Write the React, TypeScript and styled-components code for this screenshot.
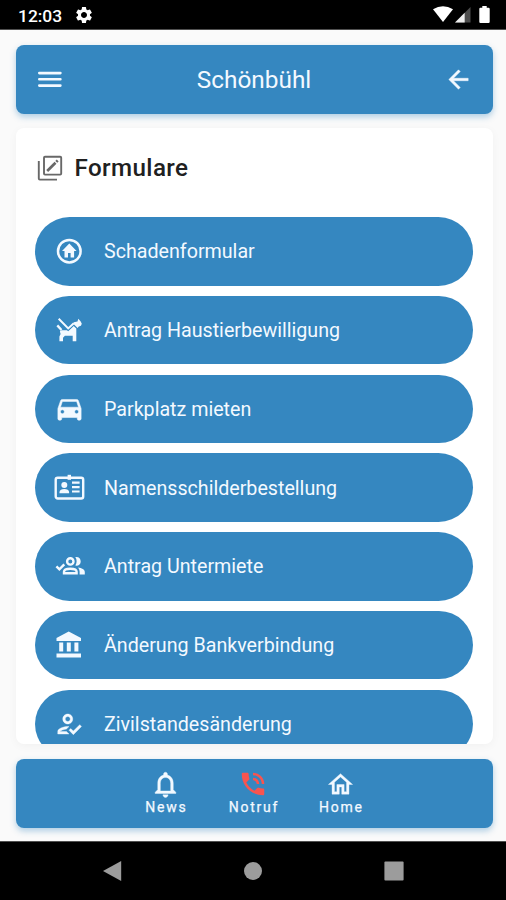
import React from "react";
import styled, { createGlobalStyle } from "styled-components";
import {
  MdArrowBack,
  MdDirectionsCar,
  MdNotificationsNone,
  MdOutlineHome,
  MdOutlineHowToReg,
  MdPhoneInTalk,
  MdSettings,
} from "react-icons/md";

const BLUE = "#3587c0";

const GlobalStyle = createGlobalStyle`
  * { box-sizing: border-box; }
  body { margin: 0; background: #fafafa; font-family: Roboto, "Liberation Sans", sans-serif; }
  svg { display: block; flex: none; }
  svg path[d^="M0 0h24v24H0"] { stroke: none; }
  button { border: 0; margin: 0; padding: 0; background: none; color: inherit; font: inherit; }
`;

const Screen = styled.div`
  width: 506px;
  height: 900px;
  display: flex;
  flex-direction: column;
  background: #fafafa;
  overflow: hidden;
`;

const StatusBar = styled.header`
  height: 30px;
  flex: none;
  display: flex;
  justify-content: space-between;
  padding: 0 16px 0 18px;
  background: #000;
  border-bottom: 1px solid #505050;
  color: #fff;
`;

const StatusGroup = styled.div<{ $gap: number }>`
  display: flex;
  align-items: center;
  gap: ${(p) => p.$gap}px;
`;

const Clock = styled.span`
  font-size: 17.4px;
  line-height: 30px;
  font-weight: 500;
  padding-top: 3px;
`;

const Main = styled.main`
  flex: 1;
  min-height: 0;
  display: flex;
  flex-direction: column;
  gap: 14px;
  padding: 15px 13px 13px 16px;
`;

const Bar = styled.div`
  height: 69px;
  flex: none;
  display: flex;
  align-items: center;
  border-radius: 8px;
  background: ${BLUE};
  color: #f3f9ff;
  box-shadow: 0 3px 6px rgba(53, 135, 192, 0.38);
`;

const AppBar = styled(Bar)`
  justify-content: space-between;
  padding: 0 20px 0 18px;
`;

const Title = styled.h1`
  margin: 0 1px 0 0;
  font-size: 24.4px;
  font-weight: 400;
  line-height: 30px;
`;

const Card = styled.section`
  height: 616px;
  flex: none;
  overflow: hidden;
  padding: 23px 20px 0 19px;
  border-radius: 8px;
  background: #fff;
  box-shadow: 0 2px 10px rgba(0, 0, 0, 0.04);
`;

const Heading = styled.div`
  height: 34px;
  margin-bottom: 32px;
  display: flex;
  align-items: center;
  gap: 7.5px;
  color: #202020;
`;

const HeadingText = styled.h2`
  margin: 0;
  font-size: 24.2px;
  line-height: 33px;
  font-weight: 500;
  letter-spacing: 0.4px;
`;

const List = styled.div`
  display: flex;
  flex-direction: column;
  gap: 10.3px;
`;

const Pill = styled.button`
  width: 100%;
  height: 68.5px;
  flex: none;
  display: flex;
  align-items: center;
  padding-left: 18px;
  gap: 19px;
  border-radius: 35px;
  background: ${BLUE};
  color: #f3f9ff;
  font-size: 19.67px;
  text-align: left;
`;

const IconSlot = styled.span`
  width: 32px;
  height: 32px;
  flex: none;
  display: flex;
  align-items: center;
  justify-content: center;
`;

const Label = styled.span`
  padding-top: 2px;
  line-height: 28px;
`;

const BottomBar = styled(Bar)`
  margin-top: 1px;
  padding-right: 3px;
  justify-content: center;
`;

const NavItem = styled.button<{ $accent?: string }>`
  width: 87.5px;
  display: flex;
  flex-direction: column;
  align-items: center;
  font-size: 14px;
  line-height: 16px;
  padding-bottom: 3px;
  svg { color: ${(p) => p.$accent ?? "inherit"}; }
`;

const NavIcon = styled.span`
  height: 30px;
  display: flex;
  align-items: center;
`;

const NavLabel = styled.span`
  letter-spacing: 1.75px;
  margin-right: -1.75px;
  -webkit-text-stroke: 0.25px currentColor;
`;

const SystemNav = styled.footer`
  height: 59px;
  flex: none;
  display: flex;
  align-items: center;
  justify-content: center;
  gap: 121px;
  background: #000;
  border-top: 1px solid #505050;
  color: #9c9c9c;
`;

const MenuIcon = () => (
  <svg width="31" height="31" viewBox="0 0 31 31" stroke="currentColor" strokeWidth="2.6" strokeLinecap="round">
    <path d="M5.3 9.1H26.4M5.3 15.3H26.4M5.3 21.6H26.4" />
  </svg>
);

const EditStackIcon = () => (
  <svg width="32" height="32" viewBox="0 0 32 32" fill="none" stroke="#686868" strokeWidth="1.9">
    <rect x="9" y="4.8" width="17.2" height="17.8" rx="1" />
    <path d="M3.8 9V26.5Q3.8 27.6 4.8 27.6H22" />
    <path d="M12.2 19 20.5 10.7" strokeWidth="2.7" />
    <path d="M21.3 9.9 22.7 8.5" strokeWidth="2.7" />
  </svg>
);

const HomeCircleIcon = () => (
  <svg width="32" height="32" viewBox="0 0 32 32" fill="currentColor">
    <circle cx="16.3" cy="16.2" r="11.3" fill="none" stroke="currentColor" strokeWidth="2.5" />
    <path d="M16.3 8.6 9 15.9H11.5V22.6H15V18H17.6V22.6H21.1V15.9H23.6Z" />
  </svg>
);

const DogIcon = () => (
  <svg width="32" height="32" viewBox="0 0 32 32" fill="currentColor">
    <path d="M6.9 17.4Q7.4 16.2 9 16.2H16L20.4 11.8 23.3 14.6V27.3H19.7V21.7H11.9L10 23.7V27.3H6.4V22.6L7.6 20Z" />
    <path d="M5.7 4.7 15.2 14.4 20.8 9.2" fill="none" stroke={BLUE} strokeWidth="4" />
    <path d="M5.7 4.7 15.2 14.4 20.8 9.2" fill="none" stroke="currentColor" strokeWidth="2" />
    <path d="M4.3 11.4 8.5 16" fill="none" stroke="currentColor" strokeWidth="2.3" />
    <path d="M20.8 8.2 24.5 7.4 25.3 4.8 27.7 7.5 28.8 9.8Q28.6 12.2 25.8 12.6L24.6 13.9 20.3 9.8Z" />
  </svg>
);

const BadgeIcon = () => (
  <svg width="32" height="32" viewBox="0 0 32 32" fill="currentColor">
    <rect x="2.7" y="5.7" width="27.5" height="20.8" rx="2" fill="none" stroke="currentColor" strokeWidth="2.4" />
    <path d="M14.6 2.8H18V7.8H14.6Z" />
    <circle cx="11.3" cy="12.9" r="3" />
    <path d="M6.5 21.3V19.9C6.5 18 8.7 17 11.3 17S16.1 18 16.1 19.9V21.3Z" />
    <path d="M19 10.7H26.6M19 15.1H26.6M19 19.5H26.6" stroke="currentColor" strokeWidth="2.2" />
  </svg>
);

const PeopleCheckIcon = () => (
  <svg width="32" height="32" viewBox="0 0 32 32" fill="none" stroke="currentColor" strokeWidth="2.4">
    <path d="M3.4 16.3 6.4 19.4 11.3 14.4" />
    <circle cx="17.3" cy="11.4" r="3.2" />
    <path d="M11 23.3V21.8C11 19.7 14.3 18.7 17.3 18.7S23.6 19.7 23.6 21.8V23.3Z" />
    <path
      d="M22.3 7.1C26 6.7 27.7 8.7 27.7 11.4S25.8 16 22.3 15.6C24.1 12.9 24.1 9.8 22.3 7.1ZM25.1 17.5C28.7 18 31.8 19.3 31.8 22V24.5H26.6V21.8Q26.6 19.2 25.1 17.5Z"
      fill="currentColor"
      stroke="none"
    />
  </svg>
);

const BankIcon = () => (
  <svg width="32" height="32" viewBox="0 0 32 32" fill="currentColor">
    <path d="M15.7 2.6 28 9.1V11.9H3.5V9.1ZM6.2 13.6H10.2V22.6H6.2ZM13.8 13.6H17.8V22.6H13.8ZM21.4 13.6H25.4V22.6H21.4ZM3.5 24.6H28V28.6H3.5Z" />
  </svg>
);

const WifiIcon = () => (
  <svg width="20" height="17" viewBox="0 0 20 17" fill="currentColor">
    <path d="M0 3.2Q10-2.8 20 3.2L10 16Z" />
  </svg>
);

const SignalIcon = () => (
  <svg width="16" height="17" viewBox="0 0 16 17">
    <path d="M0 16.5 15.5 1V16.5Z" fill="#4c4c4c" />
    <path d="M0 16.5 9.7 6.8V16.5Z" fill="#ededed" />
  </svg>
);

const BatteryIcon = () => (
  <svg width="11" height="17" viewBox="0 0 11 17" fill="currentColor">
    <path d="M3.3 0H7.7V1.8H9.6Q10.7 1.8 10.7 3V15.8Q10.7 17 9.6 17H1.4Q.3 17 .3 15.8V3Q.3 1.8 1.4 1.8H3.3Z" />
  </svg>
);

const forms = [
  { label: "Schadenformular", icon: <HomeCircleIcon /> },
  { label: "Antrag Haustierbewilligung", icon: <DogIcon /> },
  { label: "Parkplatz mieten", icon: <MdDirectionsCar size={31} stroke="currentColor" strokeWidth={0.4} /> },
  { label: "Namensschilderbestellung", icon: <BadgeIcon /> },
  { label: "Antrag Untermiete", icon: <PeopleCheckIcon /> },
  { label: "Änderung Bankverbindung", icon: <BankIcon /> },
  { label: "Zivilstandesänderung", icon: <MdOutlineHowToReg size={30} stroke="currentColor" strokeWidth={0.3} /> },
];

const tabs = [
  { label: "News", icon: <MdNotificationsNone size={31} stroke="currentColor" strokeWidth={0.3} /> },
  { label: "Notruf", icon: <MdPhoneInTalk size={30} />, accent: "#f9544f" },
  { label: "Home", icon: <MdOutlineHome size={29} stroke="currentColor" strokeWidth={0.3} /> },
];

export default function App() {
  return (
    <>
      <GlobalStyle />
      <Screen>
        <StatusBar>
          <StatusGroup $gap={12}>
            <Clock>12:03</Clock>
            <MdSettings size={20} />
          </StatusGroup>
          <StatusGroup $gap={8}>
            <StatusGroup $gap={2}>
              <WifiIcon />
              <SignalIcon />
            </StatusGroup>
            <BatteryIcon />
          </StatusGroup>
        </StatusBar>
        <Main>
          <AppBar>
            <MenuIcon />
            <Title>Schönbühl</Title>
            <MdArrowBack size={29} stroke="currentColor" strokeWidth={0.4} />
          </AppBar>
          <Card>
            <Heading>
              <EditStackIcon />
              <HeadingText>Formulare</HeadingText>
            </Heading>
            <List>
              {forms.map((form) => (
                <Pill key={form.label}>
                  <IconSlot>{form.icon}</IconSlot>
                  <Label>{form.label}</Label>
                </Pill>
              ))}
            </List>
          </Card>
          <BottomBar>
            {tabs.map((tab) => (
              <NavItem key={tab.label} $accent={tab.accent}>
                <NavIcon>{tab.icon}</NavIcon>
                <NavLabel>{tab.label}</NavLabel>
              </NavItem>
            ))}
          </BottomBar>
        </Main>
        <SystemNav>
          <svg width="19" height="20" viewBox="0 0 19 20" fill="currentColor">
            <path d="M18.2 0V20L0 10Z" />
          </svg>
          <svg width="20" height="20" viewBox="0 0 20 20" fill="currentColor">
            <circle cx="10" cy="10" r="9" />
          </svg>
          <svg width="20" height="20" viewBox="0 0 20 20" fill="currentColor">
            <rect x=".4" y=".4" width="19.2" height="19.2" rx="1" />
          </svg>
        </SystemNav>
      </Screen>
    </>
  );
}
